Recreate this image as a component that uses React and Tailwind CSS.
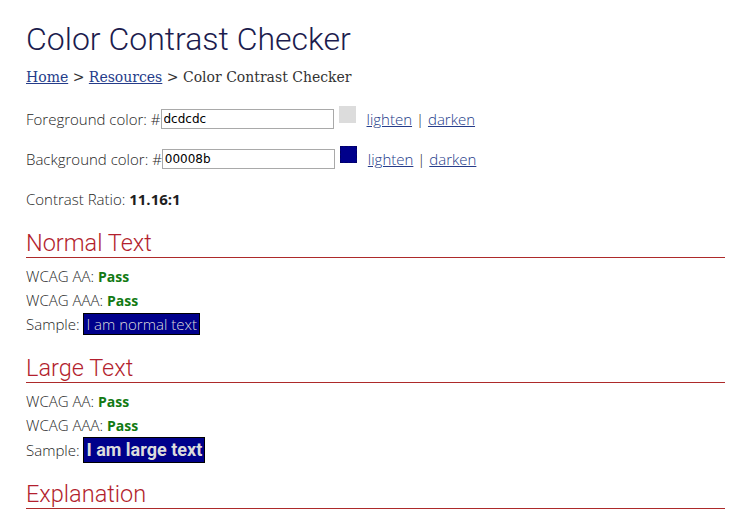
import React, { useState } from 'react';

const body = "font-['Open_Sans',sans-serif] font-light text-[15px] text-[#1e1e1e]";

const ColorRow = ({ label, value, swatch, dashed, className }) => (
    <div className={`flex items-center h-[24px] ${className}`}>
        <span>{label} #</span>
        <input
            type="text"
            defaultValue={value}
            className="w-[173px] h-[20px] border border-[#a9a9a9] px-[2px] font-['DejaVu_Sans',sans-serif] text-[12px] text-black font-normal outline-none"
        />
        <span
            className={`ml-[5px] -mt-[10px] w-[17px] h-[17px] ${dashed ? 'border border-dashed border-[#000066]' : ''}`}
            style={{ background: swatch }}
        />
        <span className="ml-[11px]">
            <a href="#" className="underline text-[#253c8a]">lighten</a> | <a href="#" className="underline text-[#253c8a]">darken</a>
        </span>
    </div>
);

const Section = ({ title, className }) => (
    <h2 className={`font-['Roboto',sans-serif] text-[23.5px] leading-[28px] text-[#b31f2e] border-b border-[#ad2a2a] ${className}`}>
        {title}
    </h2>
);

const Results = ({ large, className }) => (
    <div className={className}>
        <div className="leading-[23.5px]">WCAG AA: <b className="font-bold text-[14px] text-[#137a13] font-['Open_Sans',sans-serif]">Pass</b></div>
        <div className="leading-[23.5px]">WCAG AAA: <b className="font-bold text-[14px] text-[#137a13] font-['Open_Sans',sans-serif]">Pass</b></div>
        <div className={`flex items-center ${large ? 'h-[26px]' : 'h-[24px]'}`}>
            <span>Sample:&nbsp;</span>
            {large ? (
                <span className="bg-[#00008b] text-[#dcdcdc] border border-black px-[2px] text-[18px] leading-[24px] font-bold font-['Roboto',sans-serif]">I am large text</span>
            ) : (
                <span className="bg-[#00008b] text-[#dcdcdc] border border-black px-[2px] leading-[20px]">I am normal text</span>
            )}
        </div>
    </div>
);

export default function App() {
    const [fg] = useState('dcdcdc');
    const [bg] = useState('00008b');

    return (
        <div className={`w-[732px] h-[511px] overflow-hidden bg-white px-[26px] pt-[20px] ${body}`}>
            <div className="w-[699px]">
                <h1 className="font-['Roboto',sans-serif] font-light text-[32px] leading-[38px] text-[#1c1c4e]">
                    Color Contrast Checker
                </h1>
                <div className="mt-[9px] font-['DejaVu_Serif',serif] font-normal text-[14px] leading-[20px] text-[#333]">
                    <a href="#" className="underline text-[#253c8a]">Home</a> &gt; <a href="#" className="underline text-[#253c8a]">Resources</a> &gt; Color Contrast Checker
                </div>

                <ColorRow className="mt-[20px]" label="Foreground color:" value={fg} swatch="#dcdcdc" />
                <ColorRow className="mt-[16px]" label="Background color:" value={bg} swatch="#00008b" dashed />

                <div className="mt-[16px] h-[24px] flex items-center">
                    Contrast Ratio:&nbsp;<b className="font-bold">11.16:1</b>
                </div>

                <Section title="Normal Text" className="mt-[18px]" />
                <Results className="mt-[7px]" />

                <Section title="Large Text" className="mt-[18px]" />
                <Results large className="mt-[7px]" />

                <Section title="Explanation" className="mt-[17px]" />
            </div>
        </div>
    );
}
